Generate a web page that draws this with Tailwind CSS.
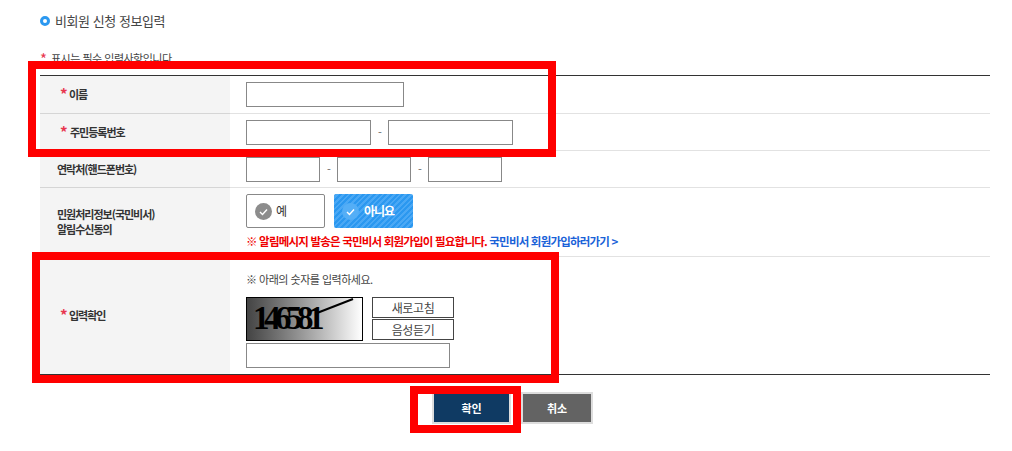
<!DOCTYPE html>
<html lang="ko">
<head>
  <meta charset="UTF-8" />
  <title>비회원 신청 정보입력</title>
  <script src="https://cdn.jsdelivr.net/npm/@tailwindcss/browser@4"></script>
</head>
<body class="bg-white font-['Noto_Sans_CJK_KR','Noto_Sans',sans-serif] text-[#333] relative h-[451px] overflow-hidden">
  <div class="pl-[40px] pr-[22px]">
    <!-- 제목 -->
    <div class="h-[43px] pb-[1px] flex items-center gap-[5px]">
      <span class="w-[10px] h-[10px] rounded-full border-[3px] border-[#2b98f0]"></span>
      <h1 class="text-[13px] leading-[18px] tracking-[-0.45px] font-normal text-[#444]">비회원 신청 정보입력</h1>
    </div>
    <p class="h-[32px] pt-[6px] text-[11px] leading-[18px] tracking-[-0.5px] text-[#444] flex"><span class="text-[#e8364f] text-[15px] leading-[20px] w-[11px]">*</span>표시는 필수 입력사항입니다</p>

    <!-- 입력 폼 -->
    <div class="border-t border-b border-[#333] text-[11px] tracking-[-1px]">
      <div class="grid grid-cols-[190px_1fr] h-[38px] border-b border-[#e2e2e2]">
        <div class="bg-[#f4f4f4] border-b border-[#d5d5d5] -mb-px flex items-center pl-[20px] font-bold"><span class="text-[#e8364f] text-[15px] w-[9px]">*</span><span>이름</span></div>
        <div class="flex items-center pl-[16px]"><input type="text" class="w-[158px] h-[25px] border border-[#888] bg-white" /></div>
      </div>
      <div class="grid grid-cols-[190px_1fr] h-[37px] border-b border-[#e2e2e2]">
        <div class="bg-[#f4f4f4] border-b border-[#d5d5d5] -mb-px flex items-center pl-[20px] font-bold"><span class="text-[#e8364f] text-[15px] w-[9px]">*</span><span class="ml-[1px]">주민등록번호</span></div>
        <div class="flex items-center pl-[16px]">
          <input type="text" class="w-[125px] h-[25px] border border-[#888]" />
          <span class="w-[17px] text-center text-[#666]">-</span>
          <input type="text" class="w-[125px] h-[25px] border border-[#888]" />
        </div>
      </div>
      <div class="grid grid-cols-[190px_1fr] h-[37px] border-b border-[#e2e2e2]">
        <div class="bg-[#f4f4f4] border-b border-[#d5d5d5] -mb-px flex items-center pl-[17px] font-bold">연락처(핸드폰번호)</div>
        <div class="flex items-center pl-[16px]">
          <input type="text" class="w-[74px] h-[25px] border border-[#888]" />
          <span class="w-[17px] text-center text-[#666]">-</span>
          <input type="text" class="w-[74px] h-[25px] border border-[#888]" />
          <span class="w-[17px] text-center text-[#666]">-</span>
          <input type="text" class="w-[74px] h-[25px] border border-[#888]" />
        </div>
      </div>
      <div class="grid grid-cols-[190px_1fr] h-[69px] border-b border-[#e2e2e2]">
        <div class="bg-[#f4f4f4] border-b border-[#d5d5d5] -mb-px flex items-center pl-[17px] font-bold leading-[15px]">민원처리정보(국민비서)<br />알림수신동의</div>
        <div class="pl-[16px] pt-[6px]">
          <div class="flex gap-[9px]">
            <button class="w-[79px] h-[34px] border border-[#888] rounded-[2px] bg-white flex items-center pl-[8px] gap-[4px] text-[12px] text-[#333]">
              <svg class="w-[17px] h-[17px]" viewBox="0 0 17 17"><circle cx="8.5" cy="8.5" r="8.5" fill="#8c8c8c"/><path d="M5 9l2.5 2.5L12 6.5" fill="none" stroke="#fff" stroke-width="1.4"/></svg>
              예
            </button>
            <button class="w-[79px] h-[34px] rounded-[2px] bg-[repeating-linear-gradient(135deg,#2b98f0_0,#2b98f0_2px,#4aa8f5_2px,#4aa8f5_4px)] flex items-center pl-[8px] gap-[5px] text-[12px] font-bold text-white">
              <svg class="w-[17px] h-[17px]" viewBox="0 0 17 17"><circle cx="8.5" cy="8.5" r="8.5" fill="#54aef6"/><path d="M5 9l2.5 2.5L12 6.5" fill="none" stroke="#fff" stroke-width="1.4"/></svg>
              아니요
            </button>
          </div>
          <p class="mt-[4px] leading-[18px] font-bold text-[11.5px] tracking-[-0.8px] text-[#f00000]">※ 알림메시지 발송은 국민비서 회원가입이 필요합니다. <a class="text-[#1a62d8]">국민비서 회원가입하러가기 &gt;</a></p>
        </div>
      </div>
      <div class="grid grid-cols-[190px_1fr] h-[117px]">
        <div class="bg-[#f4f4f4] flex items-center pl-[20px] font-bold"><span class="text-[#e8364f] text-[15px] w-[9px]">*</span><span>입력확인</span></div>
        <div class="pl-[16px] pt-[13px]">
          <p class="text-[11px] leading-[18px] tracking-[-0.5px] text-[#444]">※ 아래의 숫자를 입력하세요.</p>
          <div class="flex mt-[9px] h-[44px]">
            <div class="relative w-[117px] h-[44px] border border-black bg-gradient-to-r from-[#444] to-white overflow-hidden">
              <span class="absolute left-[6px] top-[1px] font-['Liberation_Serif',serif] font-bold text-[33px] leading-[38px] tracking-[-5.5px] text-black">146581</span>
              <svg class="absolute inset-0" width="115" height="42" viewBox="0 0 115 42"><path d="M70 15L106 1" stroke="#000" stroke-width="2"/></svg>
            </div>
            <div class="ml-[9px] w-[82px] flex flex-col gap-[1px] text-[12px] text-[#444] text-center tracking-[-0.4px]">
              <button class="h-[21px] leading-[19px] border border-[#444]">새로고침</button>
              <button class="h-[21px] leading-[19px] border border-[#444]">음성듣기</button>
            </div>
          </div>
          <input type="text" class="block mt-[2px] w-[204px] h-[25px] border border-[#888]" />
        </div>
      </div>
    </div>

    <!-- 버튼 -->
    <div class="flex gap-[10px] mt-[17px] pl-[392px] text-[11px] font-bold text-white">
      <button class="w-[79px] h-[32px] bg-[#0f3a63] border-2 border-[#ddd]">확인</button>
      <button class="w-[72px] h-[32px] bg-[#636363] border-2 border-[#ddd]">취소</button>
    </div>
  </div>

  <!-- 강조 표시 (빨간 박스) -->
  <div class="absolute left-[28px] top-[61px] w-[528px] h-[96px] border-[8px] border-[#ff0000]"></div>
  <div class="absolute left-[32px] top-[252px] w-[527px] h-[131px] border-[8px] border-[#ff0000]"></div>
  <div class="absolute left-[410px] top-[386px] w-[111px] h-[47px] border-[8px] border-[#ff0000]"></div>
</body>
</html>
